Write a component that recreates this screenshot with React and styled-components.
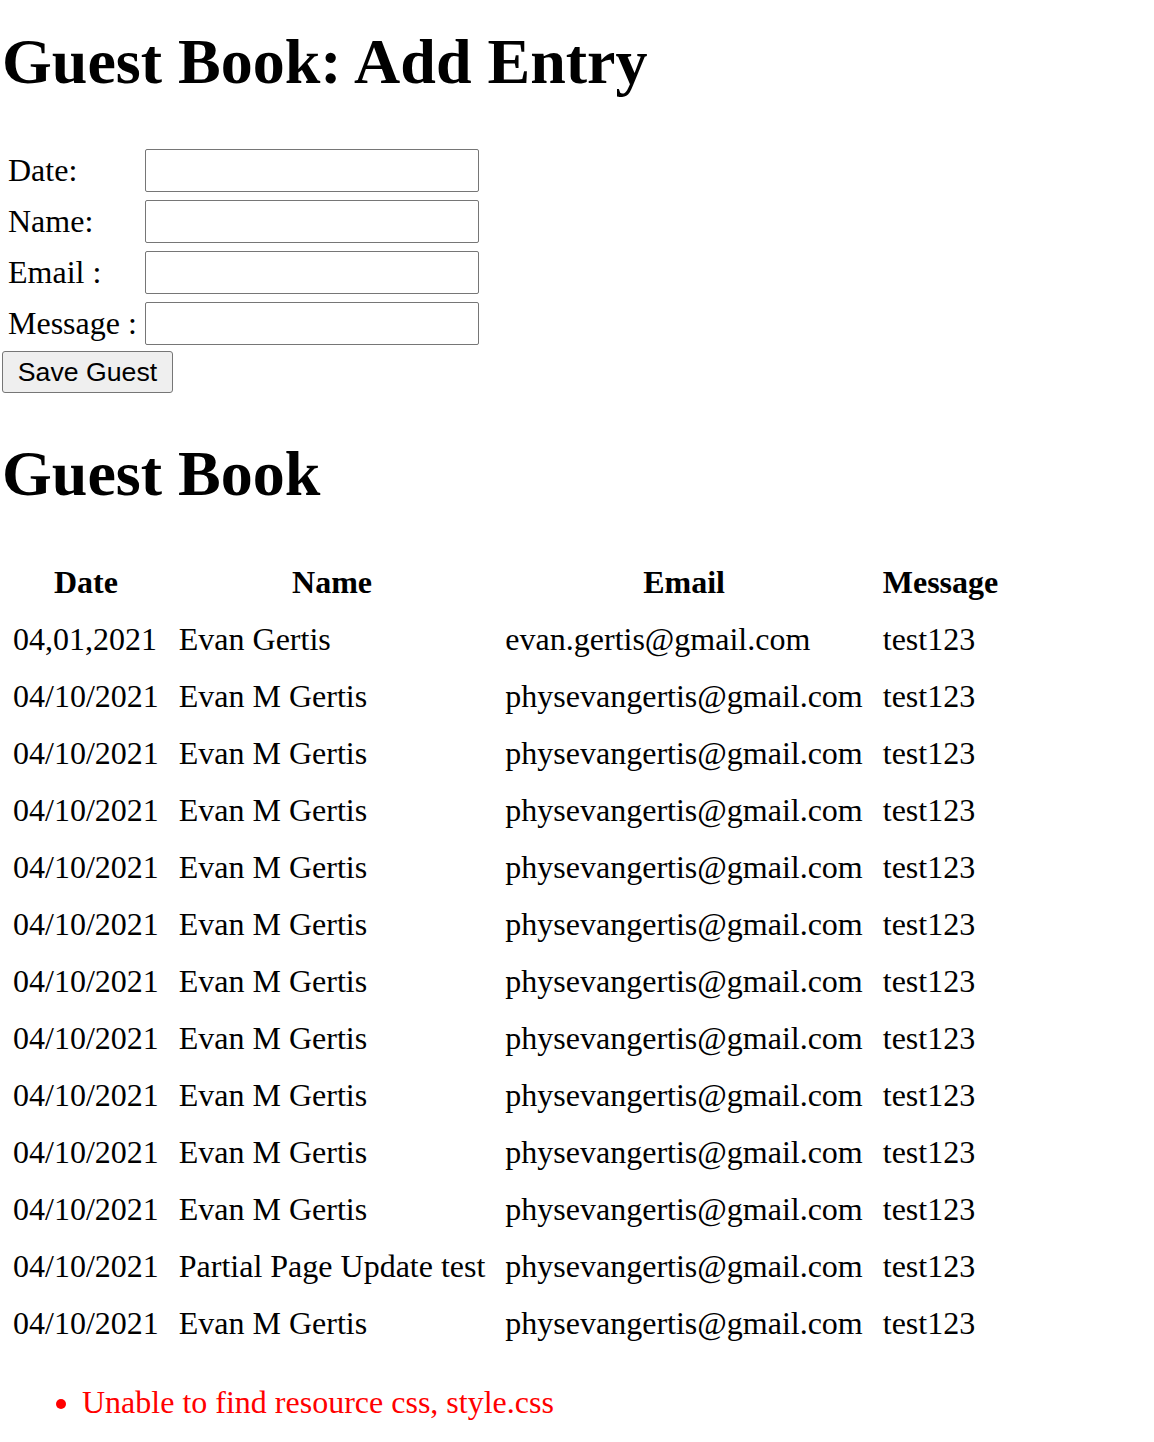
import React from "react";
import styled, { createGlobalStyle } from "styled-components";

const Global = createGlobalStyle`
  html, body { margin: 0; padding: 0; background: #fff; }
  body {
    padding-left: 2px;
    font-family: "Liberation Serif", "Times New Roman", serif;
    font-size: 32px;
    color: #000;
  }
`;

const Heading = styled.h1`
  font-family: "Liberation Serif", "Times New Roman", serif;
  font-size: 64px;
  font-weight: bold;
  line-height: normal;
  margin: ${(p) => p.$top}px 0 ${(p) => p.$bottom}px 0;
`;

const Form = styled.form`
  display: flex;
  flex-direction: column;
  align-items: flex-start;
`;

const FieldGrid = styled.div`
  display: grid;
  grid-template-columns: 129px 334px;
  column-gap: 8px;
  row-gap: 8px;
  align-items: center;
  padding: 6px 0 6px 6px;
`;

const Label = styled.label`
  font-size: 32px;
  line-height: normal;
  white-space: nowrap;
`;

const Input = styled.input`
  box-sizing: border-box;
  width: 334px;
  height: 43px;
  border: 1px solid #767676;
  border-radius: 2px;
  padding: 1px 2px;
  font-size: 26px;
  background: #fff;
`;

const Button = styled.button`
  box-sizing: border-box;
  width: 171px;
  height: 42px;
  padding: 0 12px;
  font-family: "Liberation Sans", Arial, sans-serif;
  font-size: 26.67px;
  color: #000;
  background: #efefef;
  border: 1px solid #767676;
  border-radius: 3px;
`;

const Table = styled.table`
  border-collapse: separate;
  border-spacing: 0;
  font-size: 32px;
  margin-left: 1px;
`;

const Th = styled.th`
  padding: 10px;
  font-weight: bold;
  text-align: center;
  line-height: normal;
  white-space: nowrap;
`;

const Td = styled.td`
  padding: 10px;
  text-align: left;
  line-height: normal;
  white-space: nowrap;
`;

const ErrorList = styled.ul`
  margin: 32px 0;
  padding-left: 80px;
  color: #ff0000;
  font-size: 32px;
  line-height: normal;
`;

const rows = [
  ["04,01,2021", "Evan Gertis", "evan.gertis@gmail.com", "test123"],
  ...Array.from({ length: 10 }, () => [
    "04/10/2021",
    "Evan M Gertis",
    "physevangertis@gmail.com",
    "test123",
  ]),
  ["04/10/2021", "Partial Page Update test", "physevangertis@gmail.com", "test123"],
  ["04/10/2021", "Evan M Gertis", "physevangertis@gmail.com", "test123"],
];

export default function App() {
  return (
    <>
      <Global />
      <Heading $top={25} $bottom={44}>Guest Book: Add Entry</Heading>
      <Form onSubmit={(e) => e.preventDefault()}>
        <FieldGrid>
          <Label>Date:</Label>
          <Input type="text" />
          <Label>Name:</Label>
          <Input type="text" />
          <Label>Email :</Label>
          <Input type="text" />
          <Label>Message :</Label>
          <Input type="text" />
        </FieldGrid>
        <Button type="submit">Save Guest</Button>
      </Form>
      <Heading $top={44} $bottom={43}>Guest Book</Heading>
      <Table>
        <thead>
          <tr>
            <Th>Date</Th>
            <Th>Name</Th>
            <Th>Email</Th>
            <Th>Message</Th>
          </tr>
        </thead>
        <tbody>
          {rows.map((r, i) => (
            <tr key={i}>
              {r.map((c, j) => (
                <Td key={j}>{c}</Td>
              ))}
            </tr>
          ))}
        </tbody>
      </Table>
      <ErrorList>
        <li>Unable to find resource css, style.css</li>
      </ErrorList>
    </>
  );
}
